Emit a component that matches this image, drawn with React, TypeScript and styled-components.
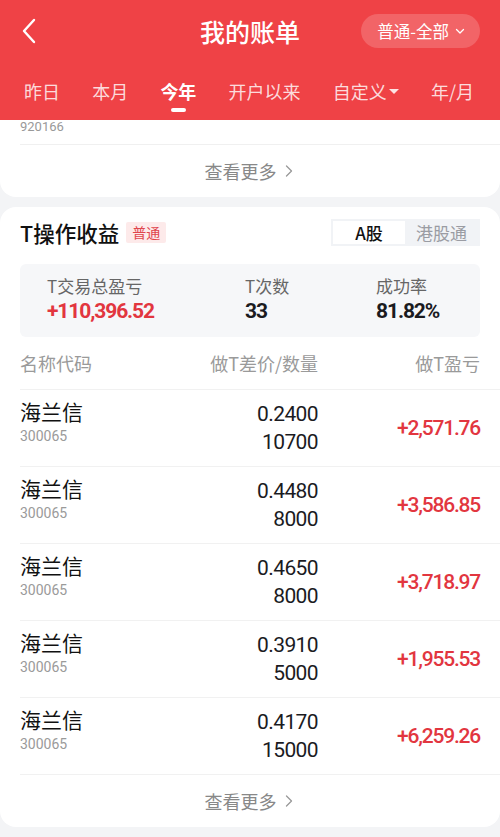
import styled, { createGlobalStyle } from 'styled-components';

const GlobalStyle = createGlobalStyle`
  html, body {
    margin: 0;
    padding: 0;
    background: #f3f4f6;
    font-family: Roboto, "Noto Sans CJK SC", sans-serif;
  }
`;

const tabs = ['昨日', '本月', '今年', '开户以来', '自定义', '年/月'];

const trades = [
  { price: '0.2400', qty: '10700', profit: '+2,571.76' },
  { price: '0.4480', qty: '8000', profit: '+3,586.85' },
  { price: '0.4650', qty: '8000', profit: '+3,718.97' },
  { price: '0.3910', qty: '5000', profit: '+1,955.53' },
  { price: '0.4170', qty: '15000', profit: '+6,259.26' },
];

const Chevron = ({ size = 14, color = '#999' }: { size?: number; color?: string }) => (
  <svg width={size} height={size} viewBox="0 0 14 14" fill="none">
    <path d="M4.5 2 L9.5 7 L4.5 12" stroke={color} strokeWidth="1.3" strokeLinecap="round" strokeLinejoin="round" />
  </svg>
);

const App = () => {
  return (
    <Page>
      <GlobalStyle />
      <Header>
        <TopBar>
          <BackBtn>
            <svg width="18" height="26" viewBox="0 0 18 26" fill="none">
              <path d="M14 2 L4 13 L14 24" stroke="#fff" strokeWidth="2.4" strokeLinecap="round" strokeLinejoin="round" />
            </svg>
          </BackBtn>
          <Title>我的账单</Title>
          <Pill>
            普通-全部
            <svg width="12" height="12" viewBox="0 0 12 12" fill="none">
              <path d="M2.5 4.5 L6 8 L9.5 4.5" stroke="#fff" strokeWidth="1.3" strokeLinecap="round" strokeLinejoin="round" />
            </svg>
          </Pill>
        </TopBar>
        <TabBar>
          {tabs.map((t) => (
            <Tab key={t} $active={t === '今年'}>
              {t}
              {t === '自定义' && <Caret />}
            </Tab>
          ))}
        </TabBar>
      </Header>

      <Card $clip>
        <ClippedCode>920166</ClippedCode>
        <MoreLink>
          查看更多
          <Chevron />
        </MoreLink>
      </Card>

      <Card>
        <CardHead>
          <TitleGroup>
            <CardTitle>T操作收益</CardTitle>
            <Tag>普通</Tag>
          </TitleGroup>
          <Segmented>
            <Segment $active>A股</Segment>
            <Segment>港股通</Segment>
          </Segmented>
        </CardHead>

        <StatsBox>
          <Stat>
            <StatLabel>T交易总盈亏</StatLabel>
            <StatValue $red>+110,396.52</StatValue>
          </Stat>
          <Stat>
            <StatLabel>T次数</StatLabel>
            <StatValue>33</StatValue>
          </Stat>
          <Stat>
            <StatLabel>成功率</StatLabel>
            <StatValue>81.82%</StatValue>
          </Stat>
        </StatsBox>

        <TableHead>
          <span>名称代码</span>
          <HeadMid>做T差价/数量</HeadMid>
          <HeadRight>做T盈亏</HeadRight>
        </TableHead>

        {trades.map((r, i) => (
          <Row key={i}>
            <NameCell>
              <StockName>海兰信</StockName>
              <StockCode>300065</StockCode>
            </NameCell>
            <PriceCell>
              <span>{r.price}</span>
              <span>{r.qty}</span>
            </PriceCell>
            <Profit>{r.profit}</Profit>
          </Row>
        ))}

        <MoreLink>
          查看更多
          <Chevron />
        </MoreLink>
      </Card>
    </Page>
  );
};

const Page = styled.div`
  width: 500px;
  height: 837px;
  overflow: hidden;
  background: #f3f4f6;
  display: flex;
  flex-direction: column;
  gap: 10px;
`;

const Header = styled.div`
  background: #ef4246;
  height: 120px;
  display: flex;
  flex-direction: column;
  margin-bottom: -10px;
  position: relative;
  z-index: 1;
`;

const TopBar = styled.div`
  height: 62px;
  display: flex;
  align-items: center;
  justify-content: space-between;
  padding: 0 20px 0 20px;
  position: relative;
`;

const BackBtn = styled.div`
  width: 30px;
  display: flex;
  align-items: center;
`;

const Title = styled.div`
  position: absolute;
  left: 50%;
  transform: translateX(-50%);
  color: #fff;
  font-size: 25px;
  font-weight: 500;
  font-family: "Noto Sans CJK SC", sans-serif;
`;

const Pill = styled.div`
  height: 34px;
  padding: 0 14px 0 16px;
  border-radius: 17px;
  background: rgba(255, 255, 255, 0.18);
  color: #fff;
  font-size: 16.5px;
  font-family: "Noto Sans CJK SC", sans-serif;
  display: flex;
  align-items: center;
  gap: 5px;
`;

const TabBar = styled.div`
  display: flex;
  justify-content: space-between;
  padding: 0 26px 0 24px;
  margin-top: 14px;
`;

const Tab = styled.div<{ $active?: boolean }>`
  position: relative;
  color: ${(p) => (p.$active ? '#fff' : 'rgba(255,255,255,0.82)')};
  font-size: 18px;
  font-weight: ${(p) => (p.$active ? 700 : 400)};
  font-family: "Noto Sans CJK SC", sans-serif;
  line-height: 30px;
  display: flex;
  align-items: center;

  &::after {
    content: '';
    display: ${(p) => (p.$active ? 'block' : 'none')};
    position: absolute;
    left: 50%;
    bottom: -6px;
    width: 15px;
    height: 4px;
    margin-left: -7px;
    border-radius: 2px;
    background: #fff;
  }
`;

const Caret = styled.span`
  width: 0;
  height: 0;
  margin-left: 2px;
  border-left: 5px solid transparent;
  border-right: 5px solid transparent;
  border-top: 5px solid rgba(255, 255, 255, 0.85);
`;

const Card = styled.div<{ $clip?: boolean }>`
  background: #fff;
  border-radius: ${(p) => (p.$clip ? '0 0 16px 16px' : '16px')};
  display: flex;
  flex-direction: column;
  flex-shrink: 0;
`;

const ClippedCode = styled.div`
  height: 24px;
  line-height: 14px;
  color: #999;
  font-size: 13px;
  border-bottom: 1px solid #f0f0f0;
  margin-left: 20px;
`;

const MoreLink = styled.div`
  height: 52px;
  display: flex;
  align-items: center;
  justify-content: center;
  gap: 5px;
  color: #888;
  font-size: 18px;
  font-family: "Noto Sans CJK SC", sans-serif;
`;

const CardHead = styled.div`
  display: flex;
  align-items: center;
  justify-content: space-between;
  padding: 12px 20px 2px 20px;
  height: 26px;
`;

const TitleGroup = styled.div`
  display: flex;
  align-items: center;
  gap: 7px;
`;

const CardTitle = styled.div`
  font-size: 21.5px;
  font-weight: 500;
  color: #111;
  font-family: "Noto Sans CJK SC", sans-serif;
`;

const Tag = styled.div`
  background: #fdeaea;
  color: #e0454c;
  font-size: 14px;
  padding: 0 6px;
  height: 21px;
  line-height: 21px;
  border-radius: 2px;
  font-family: "Noto Sans CJK SC", sans-serif;
`;

const Segmented = styled.div`
  display: flex;
  background: #f1f3f6;
  padding: 2px;
  height: 23px;
`;

const Segment = styled.div<{ $active?: boolean }>`
  width: ${(p) => (p.$active ? '72px' : '73px')};
  display: flex;
  align-items: center;
  justify-content: center;
  background: ${(p) => (p.$active ? '#fff' : 'transparent')};
  color: ${(p) => (p.$active ? '#111' : '#9a9ca3')};
  font-size: 17px;
  font-weight: ${(p) => (p.$active ? 500 : 400)};
  font-family: "Noto Sans CJK SC", sans-serif;
`;

const StatsBox = styled.div`
  margin: 17px 20px 0 20px;
  height: 73px;
  background: #f6f7f9;
  border-radius: 6px;
  display: grid;
  grid-template-columns: 198px 131px 1fr;
  padding-left: 27px;
  align-items: center;
`;

const Stat = styled.div`
  display: flex;
  flex-direction: column;
  gap: 1px;
  margin-top: -3px;
`;

const StatLabel = styled.div`
  color: #666;
  font-size: 17px;
  font-family: "Noto Sans CJK SC", sans-serif;
  line-height: 22px;
`;

const StatValue = styled.div<{ $red?: boolean }>`
  color: ${(p) => (p.$red ? '#e2363f' : '#1b1b1f')};
  font-size: 21px;
  font-weight: 700;
  line-height: 26px;
  font-family: Roboto, sans-serif;
  letter-spacing: -1.1px;
`;

const TableHead = styled.div`
  display: grid;
  grid-template-columns: 1fr 160px 162px;
  align-items: center;
  height: 52px;
  margin-left: 20px;
  padding-right: 20px;
  border-bottom: 1px solid #f1f1f1;
  color: #9a9a9a;
  font-size: 18px;
  font-family: "Noto Sans CJK SC", sans-serif;
`;

const HeadMid = styled.span`
  text-align: right;
`;

const HeadRight = styled.span`
  text-align: right;
`;

const Row = styled.div`
  display: grid;
  grid-template-columns: 1fr 160px 162px;
  align-items: center;
  height: 76px;
  margin-left: 20px;
  padding-right: 20px;
  border-bottom: 1px solid #f1f1f1;
`;

const NameCell = styled.div`
  display: flex;
  flex-direction: column;
  gap: 4px;
  margin-top: -14px;
`;

const StockName = styled.div`
  font-size: 21px;
  color: #111;
  font-family: "Noto Sans CJK SC", sans-serif;
  line-height: 26px;
`;

const StockCode = styled.div`
  font-size: 14px;
  color: #9a9a9a;
  font-family: Roboto, sans-serif;
`;

const PriceCell = styled.div`
  display: flex;
  flex-direction: column;
  align-items: flex-end;
  font-size: 21px;
  color: #1b1b1f;
  line-height: 28px;
  letter-spacing: -0.6px;
  font-family: Roboto, sans-serif;
`;

const Profit = styled.div`
  text-align: right;
  color: #e2363f;
  font-size: 21px;
  font-weight: 500;
  font-family: Roboto, sans-serif;
  letter-spacing: -1.2px;
`;

export default App;
